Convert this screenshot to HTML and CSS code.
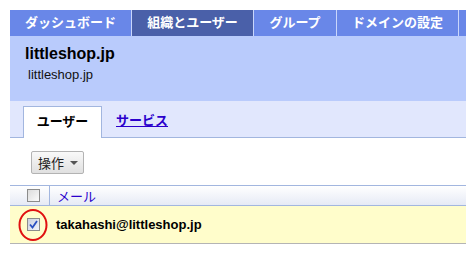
FILE: index.html
```
<!DOCTYPE html>
<html lang="ja">
<head>
    <meta charset="UTF-8">
    <title>littleshop.jp - ユーザー</title>
    <link rel="stylesheet" href="styles.css">
</head>
<body>
    <div id="page">
        <div id="nav">
            <div class="nav-tab">ダッシュボード</div>
            <div class="nav-tab active">組織とユーザー</div>
            <div class="nav-tab narrow">グループ</div>
            <div class="nav-tab">ドメインの設定</div>
            <div class="nav-tab rest"></div>
        </div>

        <div id="header">
            <div class="title">littleshop.jp</div>
            <div class="subtitle">littleshop.jp</div>
        </div>

        <div id="tabbar">
            <div class="sub-tab current">ユーザー</div>
            <a class="sub-tab link" href="#">サービス</a>
        </div>

        <div id="toolbar">
            <button class="action-btn">操作 <span class="caret"></span></button>
        </div>

        <div id="user-table">
            <div class="row head">
                <div class="cell check"><span class="box"></span></div>
                <div class="cell mail">メール</div>
            </div>
            <div class="row selected">
                <div class="cell check">
                    <span class="box checked">
                        <svg width="11" height="11" viewBox="0 0 11 11">
                            <path d="M2 5.5 L4.5 8.5 L9 2" fill="none" stroke="#2a4fc0" stroke-width="1.8"/>
                        </svg>
                    </span>
                    <svg class="highlight" width="32" height="34" viewBox="0 0 32 34">
                        <ellipse cx="16" cy="17" rx="13.5" ry="15" fill="none" stroke="#e01010" stroke-width="2"/>
                    </svg>
                </div>
                <div class="cell user">takahashi@littleshop.jp</div>
            </div>
        </div>
    </div>
</body>
</html>
```
FILE: styles.css
```
body {
    margin: 0;
    font-family: "Liberation Sans", Arial, "Noto Sans CJK JP", sans-serif;
    font-size: 13px;
    background-color: white;
    overflow: hidden;
}

#page {
    padding: 10px 0 0 10px;
}

#nav {
    display: flex;
    gap: 1px;
    height: 26px;
    background-color: #c9d6fb;
}

.nav-tab {
    width: 121px;
    flex-shrink: 0;
    background-color: #6987e8;
    color: white;
    font-weight: bold;
    font-size: 13px;
    line-height: 26px;
    text-align: center;
}

.nav-tab.active {
    background-color: #4a60a9;
}

.nav-tab.narrow {
    width: 82px;
}

.nav-tab.rest {
    flex-grow: 1;
    width: auto;
}

#header {
    background-color: #b9cbfc;
    height: 65px;
    padding: 9px 0 0 15px;
    box-sizing: border-box;
}

.title {
    font-size: 16px;
    font-weight: bold;
    line-height: 18px;
    color: #000;
}

.subtitle {
    font-size: 13px;
    line-height: 15px;
    margin: 4px 0 0 3px;
    color: #111;
}

#tabbar {
    display: flex;
    align-items: flex-end;
    height: 36px;
    background-color: #e1e7fd;
    border-bottom: 1px solid #a2b6df;
    padding-left: 13px;
}

.sub-tab {
    font-weight: bold;
    font-size: 13px;
    height: 31px;
    line-height: 30px;
    box-sizing: border-box;
    margin-bottom: -1px;
}

.sub-tab.current {
    width: 79px;
    height: 32px;
    text-align: center;
    background-color: white;
    border: 1px solid #a2b6df;
    border-bottom: none;
    color: #000;
}

.sub-tab.link {
    margin-left: 14px;
    color: #2a00cc;
    text-decoration: underline;
    line-height: 30px;
    margin-bottom: 0;
}

#toolbar {
    padding: 13px 0 11px 21px;
}

.action-btn {
    display: flex;
    align-items: center;
    gap: 6px;
    width: 53px;
    height: 23px;
    padding: 0 0 0 6px;
    border: 1px solid #b3b3b3;
    border-radius: 2px;
    background: linear-gradient(#f9f9f9, #e0e0e0);
    font-family: "Liberation Sans", "Noto Sans CJK JP", sans-serif;
    font-size: 13px;
    color: #222;
}

.caret {
    width: 0;
    height: 0;
    border-left: 4px solid transparent;
    border-right: 4px solid transparent;
    border-top: 4px solid #555;
}

#user-table {
    border-top: 1px solid #a2b6df;
}

.row {
    display: flex;
}

.row.head {
    height: 19px;
    background: linear-gradient(#ffffff, #e6eaf5);
    border-bottom: 1px solid #a2b6df;
}

.row.selected {
    height: 37px;
    background-color: #fffdcb;
    border-bottom: 1px solid #b4b4b4;
}

.cell {
    display: flex;
    align-items: center;
}

.cell.check {
    position: relative;
    width: 40px;
    padding-left: 17px;
    box-sizing: border-box;
    flex-shrink: 0;
}

.head .cell.check {
    border-right: 1px solid #a2b6df;
}

.cell.mail {
    padding-left: 7px;
    color: #2a00cc;
}

.cell.user {
    padding-left: 6px;
    font-weight: bold;
    color: #000;
}

.box {
    display: flex;
    align-items: center;
    justify-content: center;
    width: 11px;
    height: 11px;
    border: 1px solid #8c8c8c;
    background: linear-gradient(135deg, #dcdcdc, #fbfbfb);
}

.box.checked {
    background: linear-gradient(135deg, #c9cfe0, #f2f4fa);
}

.highlight {
    position: absolute;
    left: 7px;
    top: 2px;
}
```
